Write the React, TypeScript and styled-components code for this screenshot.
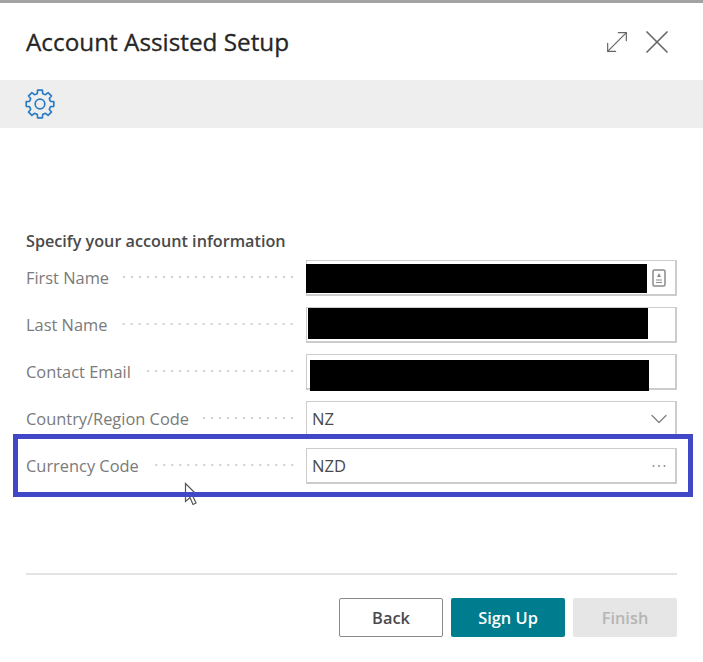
import React, { FC } from 'react';
import styled, { createGlobalStyle } from 'styled-components';
import { ChevronDown, MoveDiagonal, X } from 'lucide-react';

const GlobalStyle = createGlobalStyle`
    html, body {
        margin: 0;
        padding: 0;
        background: #ffffff;
    }
    body {
        font-family: "Open Sans", "Noto Sans", "Liberation Sans", sans-serif;
    }
`

const Root = styled.div`
    position: relative;
    width: 703px;
    height: 662px;
    overflow: hidden;
    background: #ffffff;
    border-top: 3px solid #a3a3a3;
    box-sizing: border-box;
`

const Header = styled.div`
    height: 77px;
    display: flex;
    align-items: center;
    justify-content: space-between;
    padding: 0 26px 0 26px;
`

const Title = styled.h1`
    margin: 0;
    font-size: 24.3px;
    font-weight: 400;
    color: #262626;
    -webkit-text-stroke: 0.3px #262626;
`

const HeaderIcons = styled.div`
    display: flex;
    align-items: center;
    gap: 4px;
    color: #666666;
`

const Toolbar = styled.div`
    height: 48px;
    display: flex;
    align-items: center;
    padding-left: 24px;
    background: #eeeeee;
    color: #2b7cc4;
`

const Content = styled.div`
    padding: 103px 26px 0 26px;
`

const SectionTitle = styled.div`
    font-size: 16.2px;
    line-height: 20px;
    font-weight: 600;
    color: #4a4a4a;
    margin-bottom: 9px;
`

const Rows = styled.div`
    display: grid;
    grid-auto-rows: 36px;
    row-gap: 11px;
`

const Row = styled.div`
    display: grid;
    grid-template-columns: 280px 371px;
    align-items: center;
`

const LabelCell = styled.div`
    display: flex;
    align-items: center;
    gap: 14px;
    padding: 0 10px 2px 0;
`

const Label = styled.span`
    font-size: 16.4px;
    color: #7a7a7a;
    white-space: nowrap;
`

const Dots = styled.span`
    flex: 1;
    height: 2px;
    background-image: radial-gradient(circle, #d0d0d0 0.8px, transparent 1px);
    background-size: 8px 2px;
    background-position: right center;
`

const Field = styled.div`
    position: relative;
    height: 36px;
    box-sizing: border-box;
    display: flex;
    align-items: center;
    justify-content: space-between;
    padding: 0 8px 0 5px;
    border: 2px solid #cccccc;
    border-width: 1px 2px 2px 1px;
    font-size: 16.6px;
    color: #4a4a4a;
    background: #ffffff;
`

// censored values in the recording
const Redaction = styled.div<{ $left: number; $top: number; $width: number; $height: number }>`
    position: absolute;
    left: ${p => p.$left}px;
    top: ${p => p.$top}px;
    width: ${p => p.$width}px;
    height: ${p => p.$height}px;
    background: #000000;
`

const FieldIcons = styled.span`
    margin-left: auto;
    display: flex;
    align-items: center;
    color: #808080;
`

const ChevronSlot = styled.span`
    display: flex;
    margin: -8px -6px -8px 0;
`

const Footer = styled.div`
    margin-top: 89px;
    border-top: 2px solid #e4e4e4;
    width: 651px;
    padding-top: 23px;
    display: flex;
    justify-content: flex-end;
    gap: 8px;
`

const Button = styled.button<{ $variant?: 'primary' | 'disabled'; $width: number }>`
    width: ${p => p.$width}px;
    height: 39px;
    padding: 0;
    border-radius: 2px;
    font-family: inherit;
    font-size: 16.4px;
    font-weight: 600;
    border: ${p => (p.$variant ? 'none' : '1px solid #8a8a8a')};
    color: ${p => (p.$variant === 'primary' ? '#ffffff' : p.$variant === 'disabled' ? '#b5b5b5' : '#4a4a4a')};
    background: ${p => (p.$variant === 'primary' ? '#007c8f' : p.$variant === 'disabled' ? '#e6e6e6' : '#ffffff')};
`

const Highlight = styled.div`
    position: absolute;
    left: 13px;
    top: 431px;
    width: 680px;
    height: 63px;
    box-sizing: border-box;
    border: 5px solid #4048c8;
    pointer-events: none;
`

const Cursor = styled.svg`
    position: absolute;
    left: 184px;
    top: 479px;
`

const rows = [
    { label: 'First Name', redaction: { $left: -1, $top: 3, $width: 341, $height: 29 }, icon: 'contact' },
    { label: 'Last Name', redaction: { $left: 1, $top: 0, $width: 340, $height: 31 } },
    { label: 'Contact Email', redaction: { $left: 3, $top: 5, $width: 339, $height: 31 } },
    { label: 'Country/Region Code', value: 'NZ', icon: 'chevron' },
    { label: 'Currency Code', value: 'NZD', icon: 'more' },
];

// eight tooth outline, one tooth straight up
const gearPath = () => {
    const cx = 16;
    const cy = 16;
    const outer = 14;
    const inner = 10.6;
    let d = '';
    for (let i = 0; i < 8; i++) {
        const mid = (i * Math.PI) / 4 - Math.PI / 2;
        const pts: [number, number][] = [
            [inner, mid - 0.39],
            [inner + 0.3, mid - 0.25],
            [outer, mid - 0.17],
            [outer, mid + 0.17],
            [inner + 0.3, mid + 0.25],
        ];
        pts.forEach(([r, a], j) => {
            const x = (cx + r * Math.cos(a)).toFixed(2);
            const y = (cy + r * Math.sin(a)).toFixed(2);
            d += `${i === 0 && j === 0 ? 'M' : 'L'}${x} ${y}`;
        });
    }
    return d + 'Z';
};

const GearIcon: FC = () => (
    <svg width="32" height="32" viewBox="0 0 32 32" fill="none" stroke="currentColor" strokeWidth="1.7" strokeLinejoin="round">
        <path d={gearPath()} />
        <circle cx="16" cy="16" r="4.8" />
    </svg>
);

const ContactIcon: FC = () => (
    <svg width="16" height="18" viewBox="0 0 16 18" fill="none" stroke="#8a8a8a" strokeWidth="1.5">
        <rect x="2" y="1" width="12" height="16" rx="1.5" />
        <path d="M8 4l2 4H6z" fill="#8a8a8a" stroke="none" />
        <path d="M5 11h6M5 13.5h6" strokeWidth="1" />
    </svg>
);

const MoreIcon: FC = () => (
    <svg width="16" height="4" viewBox="0 0 16 4" fill="#909090">
        <circle cx="2.5" cy="2" r="1" />
        <circle cx="8" cy="2" r="1" />
        <circle cx="13.5" cy="2" r="1" />
    </svg>
);

const App: FC = () => {
    return (
        <Root>
            <GlobalStyle />
            <Header>
                <Title>Account Assisted Setup</Title>
                <HeaderIcons>
                    <MoveDiagonal size={32} strokeWidth={0.9} />
                    <X size={40} strokeWidth={1} />
                </HeaderIcons>
            </Header>
            <Toolbar>
                <GearIcon />
            </Toolbar>
            <Content>
                <SectionTitle>Specify your account information</SectionTitle>
                <Rows>
                    {rows.map(row => (
                        <Row key={row.label}>
                            <LabelCell>
                                <Label>{row.label}</Label>
                                <Dots />
                            </LabelCell>
                            <Field>
                                {row.value}
                                {row.redaction && <Redaction {...row.redaction} />}
                                <FieldIcons>
                                    {row.icon === 'contact' && <ContactIcon />}
                                    {row.icon === 'chevron' && (
                                        <ChevronSlot>
                                            <ChevronDown size={28} strokeWidth={1.1} />
                                        </ChevronSlot>
                                    )}
                                    {row.icon === 'more' && <MoreIcon />}
                                </FieldIcons>
                            </Field>
                        </Row>
                    ))}
                </Rows>
                <Footer>
                    <Button $width={104}>Back</Button>
                    <Button $width={114} $variant="primary">Sign Up</Button>
                    <Button $width={104} $variant="disabled">Finish</Button>
                </Footer>
            </Content>
            <Cursor width="16" height="26" viewBox="0 0 16 26">
                <path d="M1.5 1.5v18l4.5-4 3 7 3-1.5-3-6.5h5.5z" fill="#ffffff" stroke="#555555" strokeWidth="1.2" />
            </Cursor>
            <Highlight />
        </Root>
    );
}

export default App;
